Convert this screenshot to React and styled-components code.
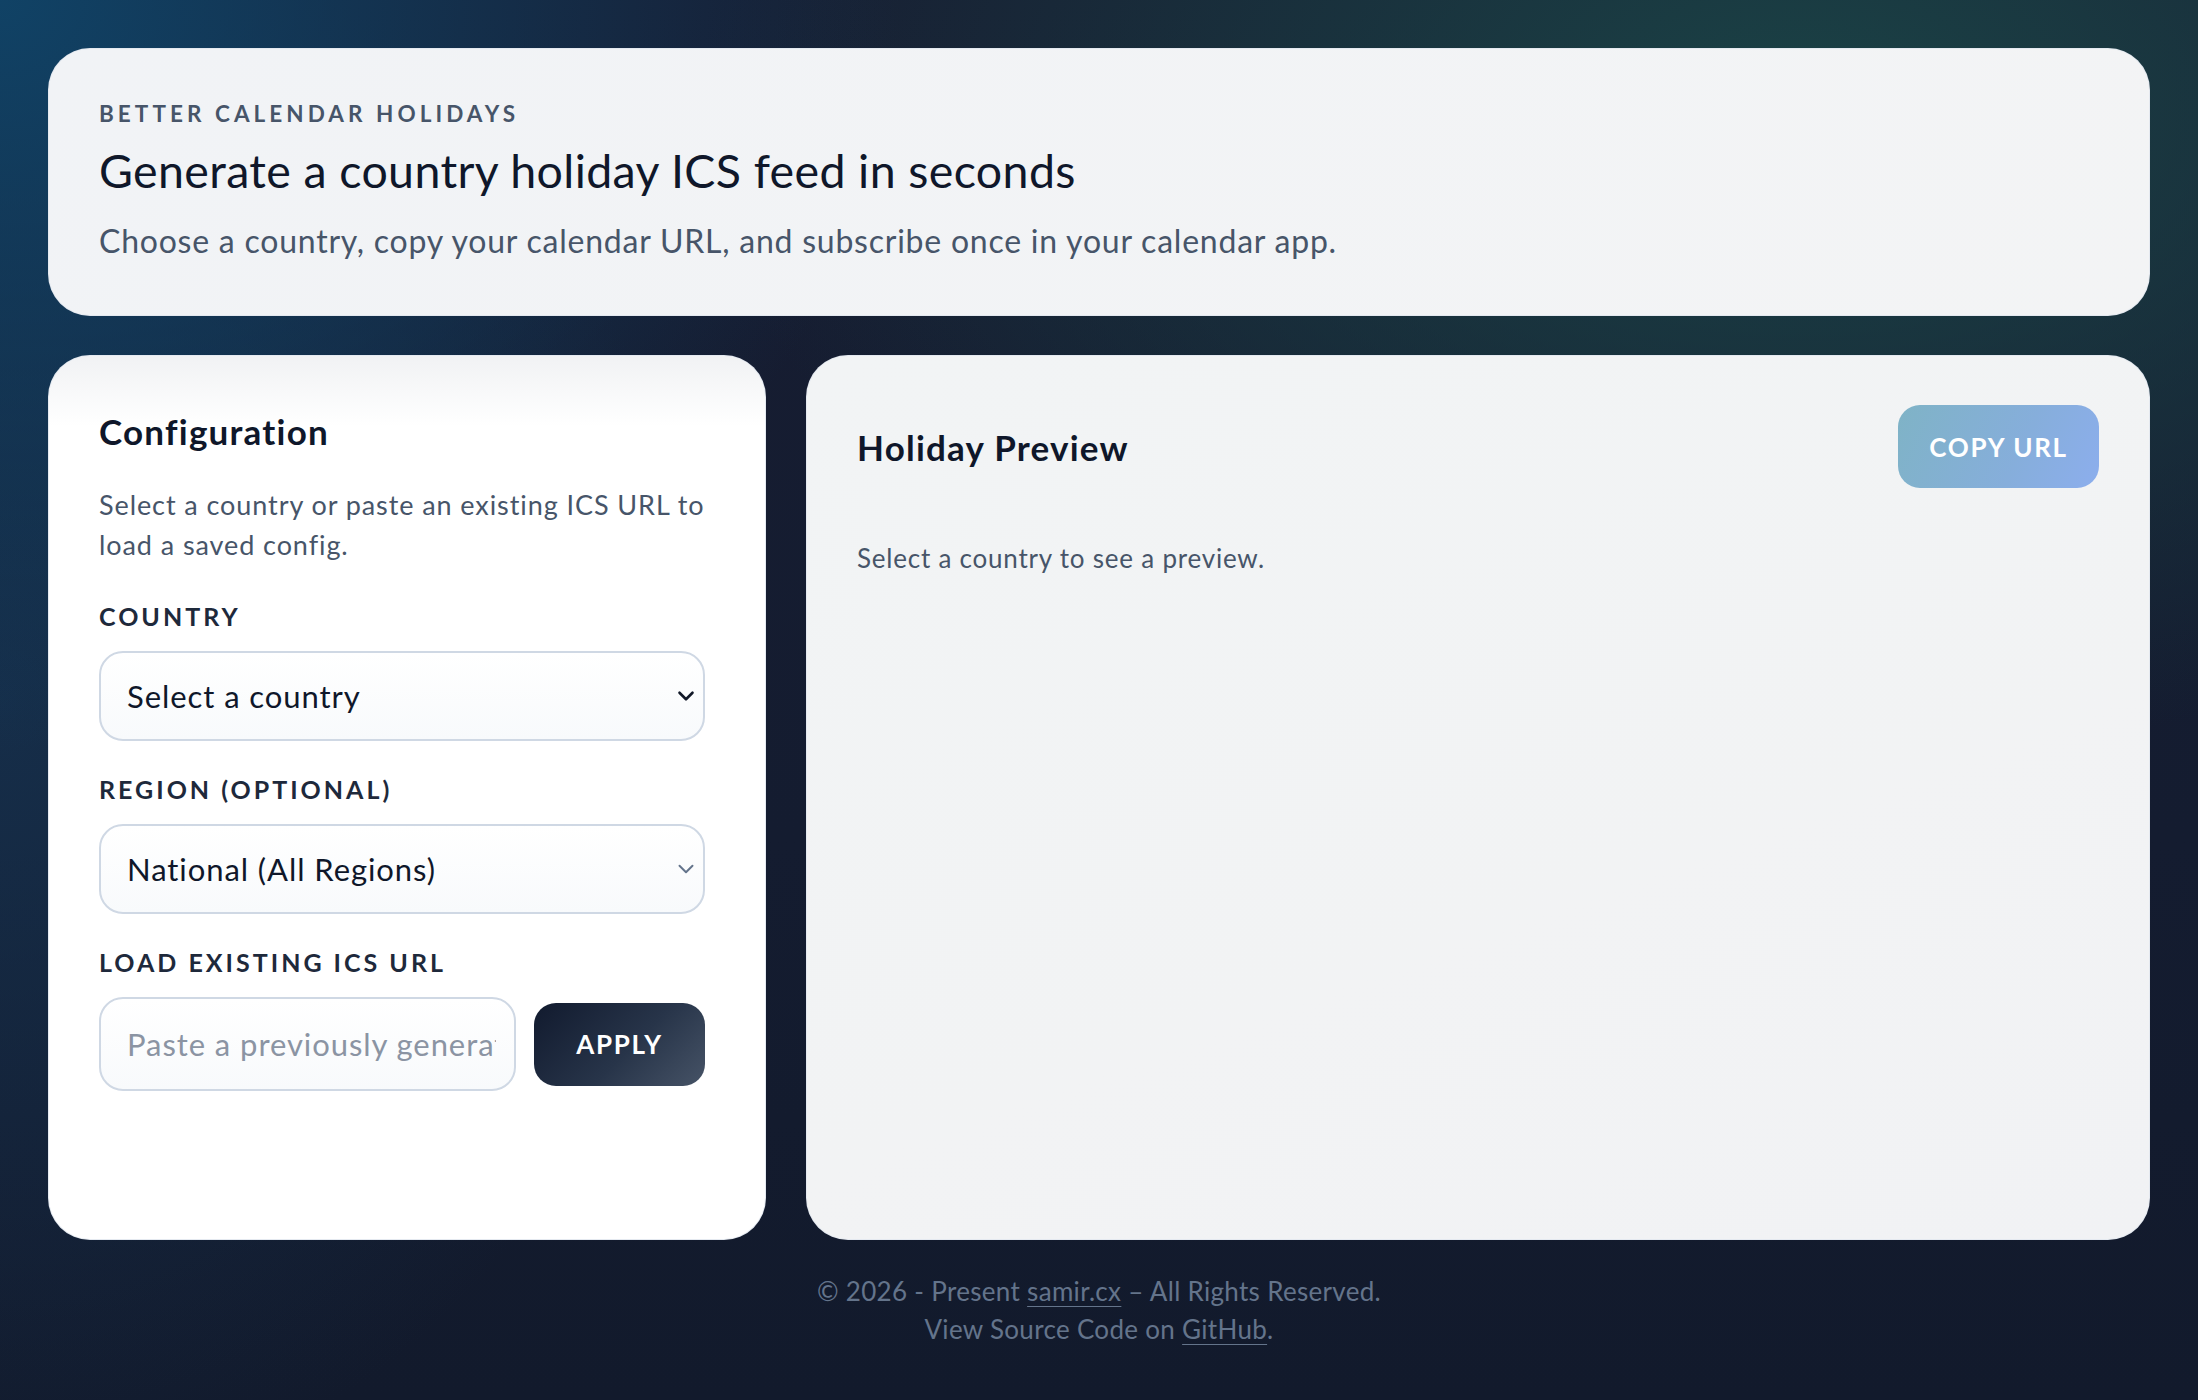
import React from 'react';
import styled, { createGlobalStyle } from 'styled-components';
import { ChevronDown } from 'lucide-react';

const GlobalStyle = createGlobalStyle`
  * { box-sizing: border-box; }
  html, body {
    margin: 0;
    padding: 0;
    font-family: "Lato", "Noto Sans", sans-serif;
    background: #131b2e;
  }
`;

const Page = styled.div`
  min-height: 1400px;
  padding: 48px 48px 40px;
  background:
    radial-gradient(ellipse 900px 750px at 0% 0%, rgba(16, 68, 104, 0.95) 0%, rgba(16, 68, 104, 0) 100%),
    radial-gradient(ellipse 1100px 650px at 82% 8%, rgba(27, 70, 72, 0.9) 0%, rgba(27, 70, 72, 0) 100%),
    radial-gradient(ellipse 700px 800px at 0% 50%, rgba(22, 52, 82, 0.75) 0%, rgba(22, 52, 82, 0) 100%),
    linear-gradient(180deg, #171d32 0%, #141c30 60%, #121a2c 100%);
`;

const Hero = styled.header`
  background: linear-gradient(135deg, #f1f3f6 0%, #f3f4f5 100%);
  border: 1px solid rgba(226, 232, 240, 0.9);
  border-radius: 42px;
  padding: 52px 50px 52px;
`;

const Eyebrow = styled.div`
  font-size: 22.5px;
  line-height: 26px;
  font-weight: 700;
  letter-spacing: 0.18em;
  color: #475569;
  text-transform: uppercase;
`;

const HeroTitle = styled.h1`
  margin: 16px 0 0;
  font-size: 46.5px;
  line-height: 55px;
  font-weight: 400;
  color: #0f172a;
  letter-spacing: 0.008em;
`;

const HeroText = styled.p`
  margin: 21px 0 0;
  font-size: 32px;
  line-height: 44px;
  color: #475569;
  letter-spacing: 0.024em;
`;

const Columns = styled.main`
  display: grid;
  grid-template-columns: 718px 1fr;
  gap: 40px;
  margin-top: 39px;
`;

const Card = styled.section`
  height: 885px;
  border-radius: 42px;
  border: 1px solid rgba(226, 232, 240, 0.9);
  padding: 50px;
  background: ${p => p.$tone === 'white'
    ? 'linear-gradient(180deg, #f1f2f4 0px, #ffffff 70px, #ffffff 100%)'
    : 'linear-gradient(160deg, #f2f4f5 0%, #f2f3f4 60%, #f1f2f4 100%)'};
`;

const CardTitle = styled.h2`
  margin: 0;
  font-size: 35px;
  line-height: 50px;
  font-weight: 700;
  color: #0f172a;
  letter-spacing: 0.035em;
`;

const Muted = styled.p`
  margin: ${p => p.$top || '29px'} 0 0;
  font-size: ${p => p.$size || '26px'};
  line-height: 40px;
  color: #475569;
  letter-spacing: ${p => p.$spacing || '0.03em'};
`;

const Form = styled.div`
  display: flex;
  flex-direction: column;
  gap: 34px;
  margin-top: 37px;
  margin-right: 10px;
`;

const Field = styled.div`
  display: flex;
  flex-direction: column;
`;

const Label = styled.label`
  font-size: 25px;
  line-height: 28px;
  font-weight: 700;
  letter-spacing: 0.12em;
  color: #1e293b;
  text-transform: uppercase;
  margin-bottom: 21px;
`;

const SelectWrap = styled.div`
  position: relative;
  height: 90px;

  svg {
    position: absolute;
    right: 6px;
    top: 50%;
    transform: translateY(-50%);
    pointer-events: none;
    color: ${p => (p.$muted ? '#64748b' : '#111827')};
  }
`;

const Select = styled.select`
  appearance: none;
  width: 100%;
  height: 100%;
  border: 2px solid #cfd8e4;
  border-radius: 24px;
  background: linear-gradient(180deg, #ffffff 0%, #f8fafc 100%);
  padding: 0 40px 0 26px;
  font-family: "Lato", "Noto Sans", sans-serif;
  font-size: 31px;
  letter-spacing: 0.03em;
  color: #0f172a;
  outline: none;
`;

const Row = styled.div`
  display: flex;
  align-items: center;
  gap: 18px;
`;

const Input = styled.input`
  flex: 1;
  min-width: 0;
  height: 94px;
  border: 2px solid #cfd8e4;
  border-radius: 24px;
  background: linear-gradient(180deg, #ffffff 0%, #f8fafc 100%);
  padding: 0 18px 0 26px;
  font-family: "Lato", "Noto Sans", sans-serif;
  font-size: 31px;
  letter-spacing: 0.03em;
  color: #0f172a;
  outline: none;

  &::placeholder {
    color: #8b94a3;
  }
`;

const Button = styled.button`
  height: 83px;
  width: ${p => p.$width};
  border: none;
  border-radius: 22px;
  font-family: "Lato", "Noto Sans", sans-serif;
  font-size: 26px;
  font-weight: 700;
  letter-spacing: 0.065em;
  color: #ffffff;
  text-transform: uppercase;
  flex-shrink: 0;
  cursor: pointer;
  background: ${p => p.$variant === 'dark'
    ? 'linear-gradient(135deg, #111a2e 0%, #273449 55%, #465366 100%)'
    : 'linear-gradient(115deg, #7fb3c6 0%, #86aedb 60%, #8caeed 100%)'};
`;

const PreviewHead = styled.div`
  display: flex;
  align-items: center;
  justify-content: space-between;
  margin-top: -1px;
`;

const Footer = styled.footer`
  margin-top: 32px;
  text-align: center;
  font-size: 26px;
  line-height: 38px;
  color: #64748b;
  letter-spacing: 0.012em;

  a {
    color: inherit;
    text-decoration: underline;
    text-underline-offset: 5px;
    text-decoration-thickness: 1px;
  }
`;

export default function App() {
  return (
    <>
      <GlobalStyle />
      <Page>
        <Hero>
          <Eyebrow>Better Calendar Holidays</Eyebrow>
          <HeroTitle>Generate a country holiday ICS feed in seconds</HeroTitle>
          <HeroText>Choose a country, copy your calendar URL, and subscribe once in your calendar app.</HeroText>
        </Hero>

        <Columns>
          <Card $tone="white">
            <CardTitle>Configuration</CardTitle>
            <Muted $size="27px" $spacing="0.034em">
              Select a country or paste an existing ICS URL to load a saved config.
            </Muted>
            <Form>
              <Field>
                <Label>Country</Label>
                <SelectWrap>
                  <Select defaultValue="">
                    <option value="">Select a country</option>
                  </Select>
                  <ChevronDown size={26} strokeWidth={2.4} />
                </SelectWrap>
              </Field>
              <Field>
                <Label>Region (optional)</Label>
                <SelectWrap $muted>
                  <Select defaultValue="">
                    <option value="">National (All Regions)</option>
                  </Select>
                  <ChevronDown size={26} strokeWidth={1.8} />
                </SelectWrap>
              </Field>
              <Field>
                <Label>Load existing ICS URL</Label>
                <Row>
                  <Input placeholder="Paste a previously generated ICS URL" />
                  <Button $variant="dark" $width="171px">Apply</Button>
                </Row>
              </Field>
            </Form>
          </Card>

          <Card $tone="gray">
            <PreviewHead>
              <CardTitle>Holiday Preview</CardTitle>
              <Button $variant="light" $width="201px">Copy URL</Button>
            </PreviewHead>
            <Muted $top="50px">Select a country to see a preview.</Muted>
          </Card>
        </Columns>

        <Footer>
          <div>© 2026 - Present <a href="#">samir.cx</a> – All Rights Reserved.</div>
          <div>View Source Code on <a href="#">GitHub</a>.</div>
        </Footer>
      </Page>
    </>
  );
}
